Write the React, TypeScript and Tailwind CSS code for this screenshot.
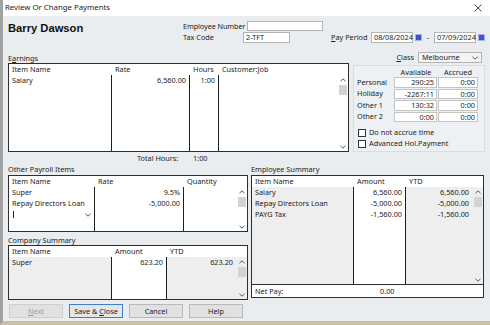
import type { ReactNode } from 'react'

type Col = { label: string; w: string; bg?: string; right?: boolean }

function Chevron({ down }: { down?: boolean }) {
  return (
    <svg width="6" height="4" viewBox="0 0 6 4" className="shrink-0">
      <polyline
        points={down ? '0.5,0.8 3,3.2 5.5,0.8' : '0.5,3.2 3,0.8 5.5,3.2'}
        fill="none"
        stroke="#555"
        strokeWidth="1"
      />
    </svg>
  )
}

function ScrollCol({ bg }: { bg?: string }) {
  return (
    <div className={`w-[11px] shrink-0 flex flex-col items-center pt-[3px] pb-[2px] ${bg ?? ''}`}>
      <Chevron />
      <div className="mt-[3px] w-[8px] h-[10px] bg-[#d3d3d3]" />
      <div className="flex-1" />
      <Chevron down />
    </div>
  )
}

function Table({
  className,
  cols,
  rows,
  scrollBg,
  footer,
  extra,
}: {
  className: string
  cols: Col[]
  rows: ReactNode[][]
  scrollBg?: string
  footer?: ReactNode
  extra?: ReactNode
}) {
  return (
    <div className={`flex flex-col border border-[#2e2e2e] bg-white ${className}`}>
      <div className="flex h-[11px] shrink-0 items-center">
        {cols.map((c) => (
          <div key={c.label} className={`${c.w} pl-[3px] leading-[11px]`}>
            {c.label}
          </div>
        ))}
      </div>
      <div className="flex flex-1 min-h-0">
        {cols.map((c, i) => (
          <div
            key={c.label}
            className={`${c.w} flex flex-col ${c.bg ?? ''} ${i < cols.length - 1 ? 'border-r border-[#1e1e1e]' : ''}`}
          >
            {rows.map((r, j) => (
              <div key={j} className={`h-[11px] leading-[11px] px-[3px] whitespace-nowrap ${c.right ? 'text-right' : ''}`}>
                {r[i]}
              </div>
            ))}
            {i === 0 && extra}
          </div>
        ))}
        <ScrollCol bg={scrollBg} />
      </div>
      {footer}
    </div>
  )
}

function Box({ className, children }: { className: string; children?: ReactNode }) {
  return (
    <div className={`h-[11px] bg-white border border-[#b4b4b4] leading-[9px] px-[2px] ${className}`}>{children}</div>
  )
}

function CalIcon() {
  return <div className="w-[7px] h-[7px] bg-[#3d53c9] border border-[#a9b3e6] shrink-0" />
}

function Check({ label }: { label: string }) {
  return (
    <div className="flex items-center gap-[3px] h-[11px]">
      <div className="w-[8px] h-[8px] bg-white border border-[#333]" />
      <span>{label}</span>
    </div>
  )
}

function Btn({ children, primary, disabled }: { children: ReactNode; primary?: boolean; disabled?: boolean }) {
  return (
    <div
      className={`w-[54px] h-[14px] flex items-center justify-center border ${
        primary ? 'border-[#3c7fd0] bg-[#e5e5e5]' : 'border-[#b9b9b9] bg-[#e1e1e1]'
      } ${disabled ? 'text-[#9c9c9c] bg-[#d9d9d9] border-[#cfcfcf]' : ''}`}
    >
      {children}
    </div>
  )
}

export default function App() {
  const leave = [
    ['Personal', '290:25', '0:00'],
    ['Holiday', '-2267:11', '0:00'],
    ['Other 1', '130:32', '0:00'],
    ['Other 2', '0:00', '0:00'],
  ]

  return (
    <div className="w-[490px] h-[325px] overflow-hidden flex flex-col bg-[#e9edf0] border-l-[3px] border-l-[#a2a2a2] border-b-[4px] border-b-[#cdbf9f] font-['Noto_Sans',sans-serif] text-[7.3px] text-[#1c1c1c]">
      {/* title bar */}
      <div className="h-[16px] shrink-0 bg-white flex items-center justify-between pl-[2px] pr-[8px]">
        <span className="text-[7.8px] text-[#222]">Review Or Change Payments</span>
        <svg width="8" height="8" viewBox="0 0 8 8">
          <path d="M0.5 0.5 L7.5 7.5 M7.5 0.5 L0.5 7.5" stroke="#333" strokeWidth="0.9" />
        </svg>
      </div>

      <div className="flex-1 flex flex-col pl-[5px] pr-[5px]">
        {/* header */}
        <div className="flex h-[34px] shrink-0">
          <div className="w-[175px] pt-[5px] font-['Liberation_Sans',sans-serif] font-bold text-[11.2px] leading-[14px] text-[#111]">
            Barry Dawson
          </div>
          <div className="w-[147px] flex flex-col pt-[5px] gap-[1px]">
            <div className="flex items-center h-[10px] w-[140px] gap-[2px]">
              <span className="shrink-0 whitespace-nowrap tracking-[-0.1px]">Employee Number</span>
              <div className="flex-1 h-[10px] bg-white border border-[#b4b4b4]" />
            </div>
            <div className="flex items-center h-[11px]">
              <span className="w-[60px]">Tax Code</span>
              <Box className="w-[47px]">2-TFT</Box>
            </div>
          </div>
          <div className="flex items-center h-[11px] mt-[16px]">
            <span className="w-[41px] pl-[1px]">
              <span className="underline">P</span>ay Period
            </span>
            <Box className="w-[42px]">08/08/2024</Box>
            <div className="w-[2px]" />
            <CalIcon />
            <span className="w-[12px] text-center">-</span>
            <Box className="w-[42px]">07/09/2024</Box>
            <div className="w-[2px]" />
            <CalIcon />
          </div>
        </div>

        {/* earnings label + class */}
        <div className="flex h-[13px] shrink-0 items-end justify-between">
          <span className="leading-[9px]">
            E<span className="underline">a</span>rnings
          </span>
          <div className="flex items-center gap-[4px] mr-[3px]">
            <span>
              <span className="underline">C</span>lass
            </span>
            <div className="w-[64px] h-[11px] bg-[#f4f4f4] border border-[#b4b4b4] flex items-center justify-between pl-[3px] pr-[3px]">
              <span>Melbourne</span>
              <Chevron down />
            </div>
          </div>
        </div>

        {/* earnings table + leave panel */}
        <div className="flex h-[89px] shrink-0">
          <Table
            className="w-[341px] h-[89px]"
            cols={[
              { label: 'Item Name', w: 'w-[103px]' },
              { label: 'Rate', w: 'w-[78px]', right: true },
              { label: 'Hours', w: 'w-[29px]', right: true },
              { label: 'Customer:Job', w: 'flex-1' },
            ]}
            rows={[['Salary', '6,560.00', '1:00', '']]}
          />
          <div className="ml-[4px] mt-[2px] w-[132px] h-[87px] bg-[#eef1f3] border border-[#d9dde0] pl-[2px] pt-[1px]">
            <div className="flex h-[10px] items-center">
              <span className="w-[38px]" />
              <span className="w-[44px] text-center">Available</span>
              <span className="w-[40px] text-center">Accrued</span>
            </div>
            <div className="flex flex-col gap-[1px]">
              {leave.map(([n, a, b]) => (
                <div key={n} className="flex items-center h-[10.5px]">
                  <span className="w-[38px] pl-[1px]">{n}</span>
                  <div className="w-[43px] h-[10.5px] bg-white border border-[#c4c4c4] text-right pr-[2px] leading-[9px]">{a}</div>
                  <div className="w-[1px]" />
                  <div className="w-[40px] h-[10.5px] bg-white border border-[#c4c4c4] text-right pr-[2px] leading-[9px]">{b}</div>
                </div>
              ))}
            </div>
            <div className="mt-[5px] pl-[2px] flex flex-col">
              <Check label="Do not accrue time" />
              <Check label="Advanced Hol.Payment" />
            </div>
          </div>
        </div>

        {/* total hours */}
        <div className="flex h-[12px] shrink-0 items-center">
          <span className="w-[129px]" />
          <span className="w-[56px]">Total Hours:</span>
          <span>1:00</span>
        </div>

        {/* bottom area */}
        <div className="flex gap-[3px] flex-1">
          <div className="w-[240px] flex flex-col">
            <div className="h-[11px] leading-[11px]">Other Payroll Items</div>
            <Table
              className="w-[240px] h-[57px]"
              cols={[
                { label: 'Item Name', w: 'w-[86px]' },
                { label: 'Rate', w: 'w-[89px]', right: true },
                { label: 'Quantity', w: 'flex-1' },
              ]}
              rows={[
                ['Super', '9.5%', ''],
                ['Repay Directors Loan', '-5,000.00', ''],
              ]}
              extra={
                <div className="h-[11px] flex items-center justify-between pl-[4px] pr-[3px]">
                  <div className="w-[1px] h-[7px] bg-[#222]" />
                  <Chevron down />
                </div>
              }
            />
            <div className="h-[13px] flex items-end leading-[9px]">Company Summary</div>
            <Table
              className="w-[240px] h-[55px]"
              cols={[
                { label: 'Item Name', w: 'w-[103px]', bg: 'bg-[#eeeeee]' },
                { label: 'Amount', w: 'w-[55px]', right: true },
                { label: 'YTD', w: 'flex-1', bg: 'bg-[#eeeeee]', right: true },
              ]}
              rows={[['Super', '623.20', '623.20']]}
              scrollBg="bg-[#eeeeee]"
            />
            <div className="flex gap-[6px] mt-[4px] pl-[1px]">
              <Btn disabled>
                <span>
                  <span className="underline">N</span>ext
                </span>
              </Btn>
              <Btn primary>
                <span>
                  Save &amp; <span className="underline">C</span>lose
                </span>
              </Btn>
              <Btn>Cancel</Btn>
              <Btn>Help</Btn>
            </div>
          </div>

          <div className="w-[233px] flex flex-col">
            <div className="h-[11px] leading-[11px]">Employee Summary</div>
            <Table
              className="w-[233px] h-[123px]"
              cols={[
                { label: 'Item Name', w: 'w-[102px]', bg: 'bg-[#eeeeee]' },
                { label: 'Amount', w: 'w-[52px]', right: true },
                { label: 'YTD', w: 'flex-1', bg: 'bg-[#eeeeee]', right: true },
              ]}
              rows={[
                ['Salary', '6,560.00', '6,560.00'],
                ['Repay Directors Loan', '-5,000.00', '-5,000.00'],
                ['PAYG Tax', '-1,560.00', '-1,560.00'],
              ]}
              scrollBg="bg-[#eeeeee]"
              footer={
                <div className="h-[13px] shrink-0 border-t border-[#2e2e2e] flex items-center">
                  <span className="w-[128px] pl-[3px]">Net Pay:</span>
                  <span>0.00</span>
                </div>
              }
            />
          </div>
        </div>
      </div>
    </div>
  )
}
